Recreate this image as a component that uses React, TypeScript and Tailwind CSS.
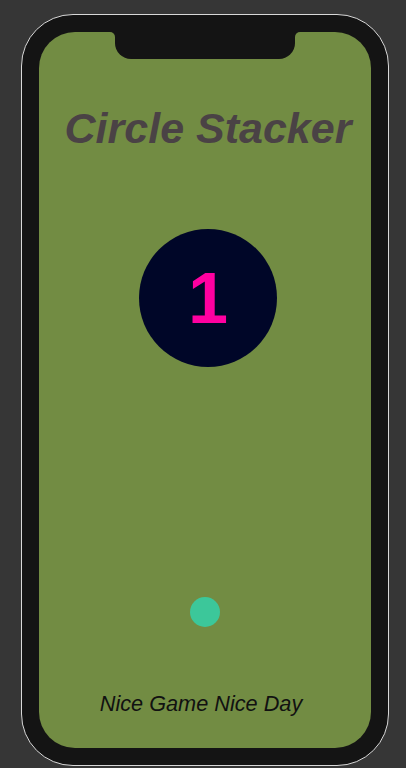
export default function App() {
  return (
    <div className="min-h-[768px] w-full bg-[#363636] pt-[14px] pl-[21px]" style={{ fontFamily: '"Liberation Sans", Arial, sans-serif' }}>
      <div className="w-[368px] h-[752px] rounded-[52px] border border-[#d8d8d8] bg-[#141414] p-[17px]">
        <div className="relative h-full w-full rounded-[36px] bg-[#728c43] flex flex-col items-center">
          {/* notch with flared top corners */}
          <div className="absolute left-1/2 top-0 -translate-x-1/2 w-[180px] h-[27px] bg-[#141414] rounded-b-[16px]">
            <div className="absolute -left-[5px] top-0 w-[5px] h-[5px] bg-[#141414]">
              <div className="w-full h-full bg-[#728c43] rounded-tr-[5px]" />
            </div>
            <div className="absolute -right-[5px] top-0 w-[5px] h-[5px] bg-[#141414]">
              <div className="w-full h-full bg-[#728c43] rounded-tl-[5px]" />
            </div>
          </div>
          <h1 className="mt-[75px] ml-[6px] text-[43px] leading-none font-bold italic text-[#4a4245]">Circle Stacker</h1>
          <div className="mt-[79px] ml-[6px] w-[138px] h-[138px] rounded-full bg-[#000628] flex items-center justify-center">
            <span className="text-[72px] leading-none font-bold text-[#ff00a0]">1</span>
          </div>
          <div className="mt-[230px] w-[30px] h-[30px] rounded-full bg-[#3cc79a]" />
          <p className="mt-[66px] mr-[8px] text-[21.7px] leading-none italic text-[#111111]">Nice Game Nice Day</p>
        </div>
      </div>
    </div>
  );
}
